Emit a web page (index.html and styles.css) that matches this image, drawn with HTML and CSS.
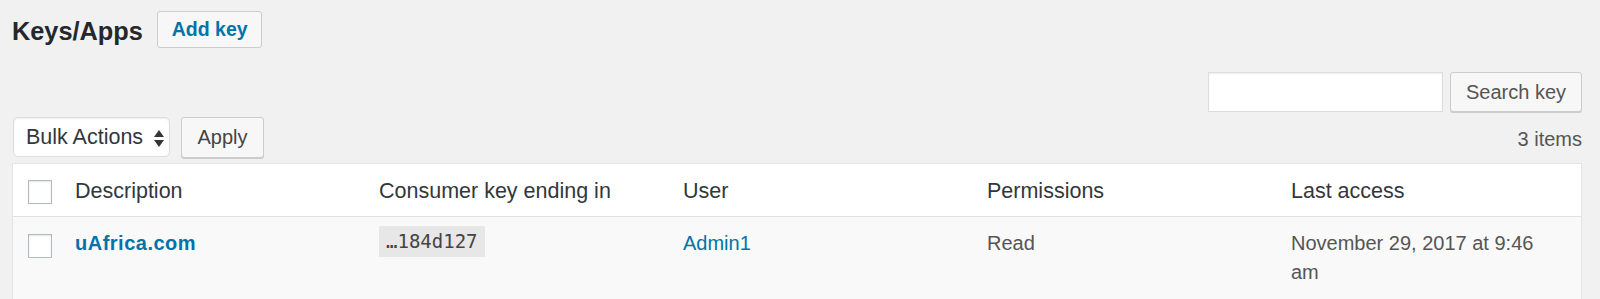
FILE: index.html
```html
<!DOCTYPE html>
<html lang="en">
<head>
<meta charset="utf-8">
<title>Keys/Apps</title>
<link rel="stylesheet" href="styles.css">
</head>
<body>
<div class="wrap">
  <div class="page-head">
    <h2 class="page-title">Keys/Apps</h2>
    <a class="add-new" href="#">Add key</a>
  </div>

  <div class="search-box">
    <input class="search-input" type="search" aria-label="Search key">
    <button class="btn btn-search" type="button">Search key</button>
  </div>

  <div class="tablenav">
    <div class="bulk">
      <div class="select">
        <span>Bulk Actions</span>
        <svg class="select-arrow" width="10" height="17" viewBox="0 0 10 17" aria-hidden="true">
          <polygon points="0,7 5,0 10,7" fill="#32373c"/>
          <polygon points="0,10 5,17 10,10" fill="#32373c"/>
        </svg>
      </div>
      <button class="btn btn-apply" type="button">Apply</button>
    </div>
    <div class="count">3 items</div>
  </div>

  <div class="table">
    <div class="row head">
      <div class="cell check"><span class="checkbox"></span></div>
      <div class="cell th">Description</div>
      <div class="cell th">Consumer key ending in</div>
      <div class="cell th">User</div>
      <div class="cell th">Permissions</div>
      <div class="cell th">Last access</div>
    </div>
    <div class="row body alt">
      <div class="cell check"><span class="checkbox"></span></div>
      <div class="cell td"><a class="row-title" href="#">uAfrica.com</a></div>
      <div class="cell td td-code"><code class="key">…184d127</code></div>
      <div class="cell td"><a class="link" href="#">Admin1</a></div>
      <div class="cell td">Read</div>
      <div class="cell td td-last">November 29, 2017 at 9:46 am</div>
    </div>
  </div>
</div>
</body>
</html>
```

FILE: styles.css
```css
html {
  overflow: hidden;
  background: #f1f1f1;
}

body {
  margin: 0;
  background: #f1f1f1;
  font-family: "Liberation Sans", Arial, sans-serif;
  color: #444;
}

.wrap {
  padding: 0 18px 0 12px;
}

.page-head {
  display: flex;
  align-items: flex-start;
  gap: 14px;
  padding-top: 11px;
}

.page-title {
  margin: 0;
  padding-top: 5px;
  font-size: 25.3px;
  line-height: 30px;
  font-weight: 700;
  color: #23282d;
}

.add-new {
  box-sizing: border-box;
  height: 37px;
  padding: 0 13px 0 14px;
  border: 1px solid #ccc;
  border-radius: 3px;
  background: #f7f7f7;
  color: #0073aa;
  font-size: 19.5px;
  font-weight: 700;
  line-height: 35px;
  text-decoration: none;
  white-space: nowrap;
}

.search-box {
  display: flex;
  justify-content: flex-end;
  gap: 7px;
  margin-top: 24px;
}

.search-input {
  box-sizing: border-box;
  width: 235px;
  height: 40px;
  margin: 0;
  border: 1px solid #ddd;
  background: #fff;
  box-shadow: inset 0 1px 2px rgba(0, 0, 0, 0.07);
  font-family: inherit;
  font-size: 20px;
}

.btn {
  box-sizing: border-box;
  margin: 0;
  padding: 0 10px;
  border: 1px solid #ccc;
  border-radius: 3px;
  background: #f7f7f7;
  box-shadow: 0 1px 0 #ccc;
  color: #555;
  font-family: inherit;
  font-size: 20px;
  white-space: nowrap;
  cursor: pointer;
}

.btn-search {
  width: 132px;
  height: 40px;
  line-height: 38px;
}

.tablenav {
  display: flex;
  justify-content: space-between;
  align-items: flex-start;
  margin-top: 5px;
}

.bulk {
  display: flex;
  align-items: flex-start;
  gap: 11px;
  margin-left: 1px;
}

.select {
  box-sizing: border-box;
  display: flex;
  align-items: center;
  justify-content: space-between;
  width: 157px;
  height: 40px;
  padding: 0 5px 0 12px;
  border: 1px solid #ddd;
  border-radius: 5px;
  background: #fff;
  box-shadow: inset 0 1px 2px rgba(0, 0, 0, 0.07);
  color: #32373c;
  font-size: 21.5px;
  line-height: 38px;
  white-space: nowrap;
}

.select-arrow {
  display: block;
  margin-top: 2px;
}

.btn-apply {
  width: 83px;
  height: 41px;
  line-height: 39px;
  color: #444;
}

.count {
  padding-top: 7px;
  font-size: 20px;
  line-height: 30px;
  color: #555;
}

.table {
  margin-top: 5px;
  border: 1px solid #e5e5e5;
  background: #fff;
  box-shadow: 0 1px 1px rgba(0, 0, 0, 0.04);
}

.row {
  display: grid;
  grid-template-columns: 48px repeat(5, 1fr);
}

.row.head {
  border-bottom: 1px solid #e1e1e1;
}

.row.alt {
  background: #f9f9f9;
}

.cell.check {
  padding: 17px 0 0 15px;
}

.head .cell.check {
  padding-top: 16px;
}

.checkbox {
  display: block;
  box-sizing: border-box;
  width: 24px;
  height: 24px;
  border: 1px solid #b4b9be;
  background: #fff;
  box-shadow: inset 0 1px 2px rgba(0, 0, 0, 0.1);
}

.th {
  padding: 12px 15px 10px 14px;
  font-size: 21.5px;
  line-height: 30px;
  color: #32373c;
}

.td {
  padding: 12px 15px 12px 14px;
  font-size: 20px;
  line-height: 29px;
  color: #555;
}

.td-last {
  padding-right: 24px;
}

.td-code {
  padding-top: 9px;
}

.key {
  display: inline-block;
  padding: 0 7px;
  background: rgba(0, 0, 0, 0.07);
  font-family: "DejaVu Sans Mono", "Liberation Mono", monospace;
  font-size: 19px;
  line-height: 31px;
  color: #444;
}

.row-title {
  color: #0073aa;
  font-weight: 700;
  font-size: 20px;
  letter-spacing: 0.5px;
  text-decoration: none;
}

.link {
  color: #0073aa;
  text-decoration: none;
}
```
